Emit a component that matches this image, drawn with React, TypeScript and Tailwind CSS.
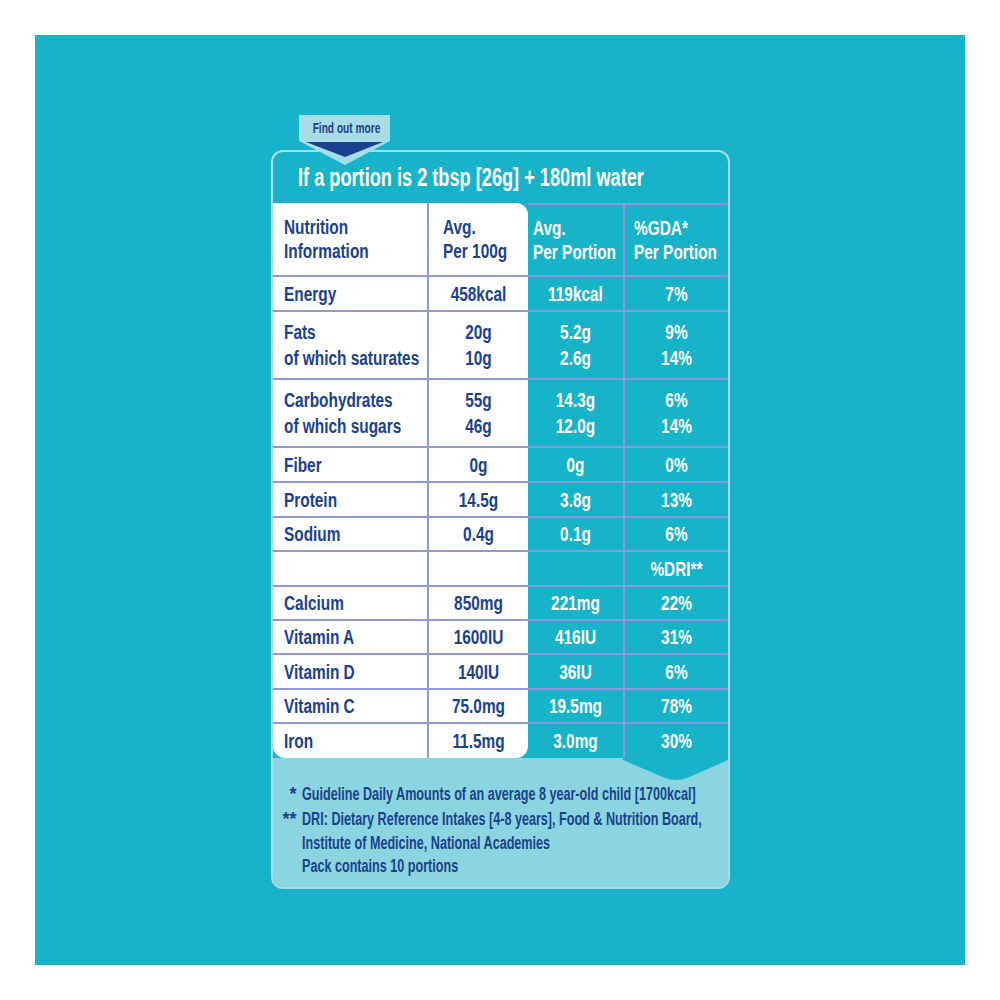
import type { ReactNode } from 'react'

type Row = {
  h: string
  name: string[]
  per100: string[]
  portion: string[]
  pct: string[]
}

const rows: Row[] = [
  { h: 'h-[35px]', name: ['Energy'], per100: ['458kcal'], portion: ['119kcal'], pct: ['7%'] },
  {
    h: 'h-[68px]',
    name: ['Fats', 'of which saturates'],
    per100: ['20g', '10g'],
    portion: ['5.2g', '2.6g'],
    pct: ['9%', '14%'],
  },
  {
    h: 'h-[68px]',
    name: ['Carbohydrates', 'of which sugars'],
    per100: ['55g', '46g'],
    portion: ['14.3g', '12.0g'],
    pct: ['6%', '14%'],
  },
  { h: 'h-[35px]', name: ['Fiber'], per100: ['0g'], portion: ['0g'], pct: ['0%'] },
  { h: 'h-[35px]', name: ['Protein'], per100: ['14.5g'], portion: ['3.8g'], pct: ['13%'] },
  { h: 'h-[34px]', name: ['Sodium'], per100: ['0.4g'], portion: ['0.1g'], pct: ['6%'] },
  { h: 'h-[35px]', name: [''], per100: [''], portion: [''], pct: ['%DRI**'] },
  { h: 'h-[34px]', name: ['Calcium'], per100: ['850mg'], portion: ['221mg'], pct: ['22%'] },
  { h: 'h-[34px]', name: ['Vitamin A'], per100: ['1600IU'], portion: ['416IU'], pct: ['31%'] },
  { h: 'h-[35px]', name: ['Vitamin D'], per100: ['140IU'], portion: ['36IU'], pct: ['6%'] },
  { h: 'h-[34px]', name: ['Vitamin C'], per100: ['75.0mg'], portion: ['19.5mg'], pct: ['78%'] },
  { h: 'h-[34px]', name: ['Iron'], per100: ['11.5mg'], portion: ['3.0mg'], pct: ['30%'] },
]

// Liberation Sans squeezed sideways stands in for the condensed DIN face of the label
function Lines({ lines, left }: { lines: string[]; left?: boolean }) {
  return (
    <>
      {lines.map((line, i) => (
        <div
          key={i}
          className={`h-[26px] scale-x-[0.77] leading-[26px] whitespace-nowrap ${left ? 'origin-left' : 'origin-center'}`}
        >
          {line}
        </div>
      ))}
    </>
  )
}

function Cell({ className, children }: { className: string; children: ReactNode }) {
  return <div className={`flex flex-col justify-center ${className}`}>{children}</div>
}

function HeadLines({ lines }: { lines: string[] }) {
  return (
    <>
      {lines.map((line) => (
        <div key={line} className="origin-left scale-x-[0.77] leading-[24px] whitespace-nowrap">
          {line}
        </div>
      ))}
    </>
  )
}

function FindOutTab() {
  return (
    <div className="relative ml-[28px] h-[35px] w-[91px]">
      <svg className="absolute left-0 top-0 z-10" width="91" height="50" viewBox="0 0 91 50">
        <polygon points="0,0 91,0 91,26 46,50 0,26" fill="#a7dde7" />
        <polygon points="7,27 84,27 46,42" fill="#1b418c" />
      </svg>
      <div className="absolute left-0 top-[5px] z-20 w-full scale-x-[0.7] text-center text-[14.5px] leading-[17px] font-bold whitespace-nowrap text-[#1b418c]">
        Find out more
      </div>
    </div>
  )
}

function Note({ mark, children, h }: { mark: string; children: ReactNode; h: string }) {
  return (
    <div className={`flex items-center ${h}`}>
      <span className="w-[24px] shrink-0 text-right">{mark}</span>
      <span className="ml-[5px] inline-block origin-left scale-x-[0.7] whitespace-nowrap">{children}</span>
    </div>
  )
}

export default function App() {
  const last = rows.length - 1
  return (
    <div className="h-[1000px] w-[1000px] bg-white p-[35px] font-['Liberation_Sans',Arial,sans-serif]">
      <div className="flex h-full justify-center bg-[#17b3c9] pt-[80px]">
        <div className="flex w-[459px] flex-col">
          <FindOutTab />
          <div className="overflow-hidden rounded-[12px] border-2 border-[#a7dde7] bg-[#17b3c9]">
            <div className="flex h-[51px] items-center pl-[25px] text-[25px] font-bold text-white">
              <div className="origin-left scale-x-[0.727] whitespace-nowrap">
                If a portion is 2 tbsp [26g] + 180ml water
              </div>
            </div>

            <div className="text-[20px] font-bold">
              <div className="grid h-[74px] grid-cols-[156px_99px_97px_103px]">
                <Cell className="border-r-2 border-b-2 border-[#8f98d8] bg-white pl-[11px] text-[#1b418c]">
                  <HeadLines lines={['Nutrition', 'Information']} />
                </Cell>
                <Cell className="rounded-tr-[12px] border-b-2 border-[#8f98d8] bg-white pl-[14px] text-[#1b418c]">
                  <HeadLines lines={['Avg.', 'Per 100g']} />
                </Cell>
                <Cell className="border-t-2 border-r-2 border-b-2 border-[#8f98d8] pl-[5px] text-white">
                  <HeadLines lines={['Avg.', 'Per Portion']} />
                </Cell>
                <Cell className="border-t-2 border-b-2 border-[#8f98d8] pl-[9px] text-white">
                  <HeadLines lines={['%GDA*', 'Per Portion']} />
                </Cell>
              </div>

              {rows.map((row, i) => {
                const isLast = i === last
                const line = isLast ? '' : 'border-b-2'
                return (
                  <div key={i} className={`grid grid-cols-[156px_99px_97px_103px] ${row.h}`}>
                    <Cell
                      className={`border-r-2 ${line} border-[#8f98d8] bg-white pl-[11px] text-[#1b418c] ${isLast ? 'rounded-bl-[12px]' : ''}`}
                    >
                      <Lines lines={row.name} left />
                    </Cell>
                    <Cell
                      className={`${line} border-[#8f98d8] bg-white text-center text-[#1b418c] ${isLast ? 'rounded-br-[12px]' : ''}`}
                    >
                      <Lines lines={row.per100} />
                    </Cell>
                    <Cell className={`border-r-2 ${line} border-[#8f98d8] text-center text-white`}>
                      <Lines lines={row.portion} />
                    </Cell>
                    <Cell className={`${line} border-[#8f98d8] text-center text-white`}>
                      <Lines lines={row.pct} />
                    </Cell>
                  </div>
                )
              })}
            </div>

            <div className="relative bg-[#8bd5e1] pt-[23px] pb-[10px] text-[18px] font-bold text-[#1b418c]">
              <svg className="absolute right-0 top-0" width="105" height="24" viewBox="0 0 105 24">
                <path d="M0 0 H105 V2 L64 20 Q53 24 42 20 L0 2 Z" fill="#17b3c9" />
              </svg>
              <Note mark="*" h="h-[26px]">
                Guideline Daily Amounts of an average 8 year-old child [1700kcal]
              </Note>
              <Note mark="**" h="h-[25px]">
                DRI: Dietary Reference Intakes [4-8 years], Food &amp; Nutrition Board,
              </Note>
              <Note mark="" h="h-[23px]">
                Institute of Medicine, National Academies
              </Note>
              <Note mark="" h="h-[22px]">
                Pack contains 10 portions
              </Note>
            </div>
          </div>
        </div>
      </div>
    </div>
  )
}
